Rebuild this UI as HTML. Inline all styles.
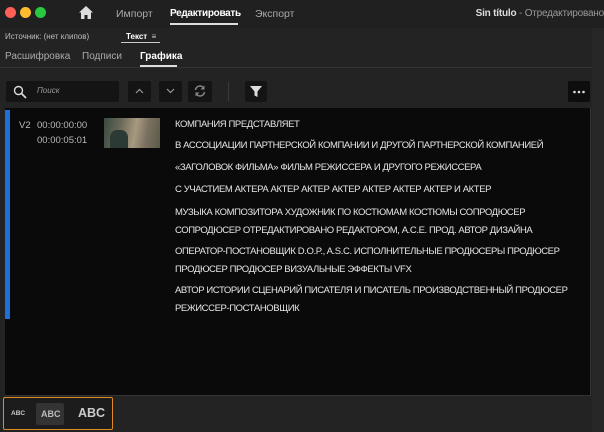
<!DOCTYPE html>
<html><head><meta charset="utf-8"><style>
*{margin:0;padding:0;box-sizing:border-box}
body{width:604px;height:432px;background:#232323;font-family:"Liberation Sans",sans-serif;color:#ccc;position:relative;overflow:hidden}
.a{position:absolute}
.dot{position:absolute;top:7px;width:11px;height:11px;border-radius:50%}
.t{position:absolute;font-size:9.5px;color:#e6e6e6;letter-spacing:-0.4px;white-space:nowrap}
.btn{position:absolute;top:81px;height:21px;background:#141414;border-radius:2px}
</style></head><body>
<div class="a" style="left:0;top:0;width:604px;height:28px;background:#202020"></div>
<div class="dot" style="left:5px;background:#fe5f57"></div>
<div class="dot" style="left:20px;background:#febc2e"></div>
<div class="dot" style="left:35px;background:#28c840"></div>
<svg class="a" style="left:79px;top:6px" width="14" height="13" viewBox="0 0 14 13"><path d="M7 0L0 6.5h2V13h3.5V9h3v4H12V6.5h2z" fill="#ddd"/></svg>
<div class="a" style="left:116px;top:8px;font-size:10.5px;color:#aaa">Импорт</div>
<div class="a" style="left:170px;top:8px;font-size:10px;color:#fff;font-weight:bold;letter-spacing:-0.3px">Редактировать</div>
<div class="a" style="left:170px;top:23px;width:68px;height:2px;background:#ddd"></div>
<div class="a" style="left:255px;top:8px;font-size:10.5px;color:#aaa">Экспорт</div>
<div class="a" style="right:0;top:8px;font-size:10px;color:#ddd;white-space:nowrap;letter-spacing:-0.2px"><b>Sin título</b> <span style="color:#999">- Отредактировано</span></div>
<div class="a" style="left:5px;top:32px;font-size:8px;color:#bbb">Источник: (нет клипов)</div>
<div class="a" style="left:126px;top:32px;font-size:8px;color:#fff;font-weight:bold">Текст <span style="font-weight:normal;color:#ccc">&nbsp;≡</span></div>
<div class="a" style="left:121px;top:42px;width:39px;height:1px;background:#ccc"></div>
<div class="a" style="left:5px;top:51px;font-size:10px;color:#aaa">Расшифровка</div>
<div class="a" style="left:82px;top:51px;font-size:10px;color:#aaa">Подписи</div>
<div class="a" style="left:140px;top:51px;font-size:10px;color:#fff;font-weight:bold">Графика</div>
<div class="a" style="left:140px;top:65px;width:37px;height:2px;background:#ddd"></div>
<div class="a" style="left:0;top:67px;width:592px;height:1px;background:#333"></div>
<div class="btn" style="left:6px;width:113px"></div>
<svg class="a" style="left:13px;top:85px" width="14" height="14" viewBox="0 0 14 14"><circle cx="5.5" cy="5.5" r="4" stroke="#ddd" stroke-width="1.4" fill="none"/><path d="M8.5 8.5L13 13" stroke="#ddd" stroke-width="1.6"/></svg>
<div class="a" style="left:37px;top:86px;font-size:8px;color:#999;font-style:italic">Поиск</div>
<div class="btn" style="left:128px;width:23px"></div>
<svg class="a" style="left:135px;top:88px" width="9" height="6"><path d="M1 5L4.5 1.5 8 5" stroke="#999" fill="none" stroke-width="1.2"/></svg>
<div class="btn" style="left:159px;width:23px"></div>
<svg class="a" style="left:166px;top:88px" width="9" height="6"><path d="M1 1L4.5 4.5 8 1" stroke="#999" fill="none" stroke-width="1.2"/></svg>
<div class="btn" style="left:188px;width:24px"></div>
<svg class="a" style="left:193px;top:84px" width="14" height="14" viewBox="0 0 14 14"><path d="M2.5 6A4.5 4.5 0 0 1 11 4.5M11.5 8A4.5 4.5 0 0 1 3 9.5" stroke="#888" fill="none" stroke-width="1.5"/><path d="M11.5 1.5v4h-4zM2.5 12.5v-4h4z" fill="#888"/></svg>
<div class="a" style="left:228px;top:82px;width:1px;height:19px;background:#3a3a3a"></div>
<div class="btn" style="left:245px;width:22px"></div>
<svg class="a" style="left:250px;top:86px" width="12" height="12"><path d="M0 0h12L7.5 5.5V11l-3-1.5V5.5z" fill="#ddd"/></svg>
<div class="btn" style="left:568px;width:22px;top:81px;background:#0d0d0d"></div>
<svg class="a" style="left:572px;top:90px" width="14" height="4"><circle cx="2.5" cy="2" r="1.3" fill="#ddd"/><circle cx="7" cy="2" r="1.3" fill="#ddd"/><circle cx="11.5" cy="2" r="1.3" fill="#ddd"/></svg>
<div class="a" style="left:5px;top:108px;width:586px;height:288px;background:#0a0a0a;border-right:1px solid #333;border-bottom:1px solid #333"></div>
<div class="a" style="left:5px;top:110px;width:5px;height:209px;background:#1f6fd8"></div>
<div class="a" style="left:19px;top:120px;font-size:9.5px;color:#bbb">V2</div>
<div class="a" style="left:37px;top:120px;font-size:9.5px;color:#bbb">00:00:00:00</div>
<div class="a" style="left:37px;top:135px;font-size:9.5px;color:#bbb">00:00:05:01</div>
<div class="a" style="left:104px;top:118px;width:56px;height:30px;background:linear-gradient(100deg,#3a4a40 0%,#6d6a5a 30%,#a89a80 55%,#7a7060 75%,#5a5a48 100%)"></div>
<div class="a" style="left:110px;top:130px;width:18px;height:18px;background:#2c3a35;border-radius:40% 40% 0 0"></div>
<div class="t" style="left:175px;top:119px">КОМПАНИЯ ПРЕДСТАВЛЯЕТ</div>
<div class="t" style="left:175px;top:140px">В АССОЦИАЦИИ ПАРТНЕРСКОЙ КОМПАНИИ И ДРУГОЙ ПАРТНЕРСКОЙ КОМПАНИЕЙ</div>
<div class="t" style="left:175px;top:162px">«ЗАГОЛОВОК ФИЛЬМА» ФИЛЬМ РЕЖИССЕРА И ДРУГОГО РЕЖИССЕРА</div>
<div class="t" style="left:175px;top:184px">С УЧАСТИЕМ АКТЕРА АКТЕР АКТЕР АКТЕР АКТЕР АКТЕР АКТЕР И АКТЕР</div>
<div class="t" style="left:175px;top:207px">МУЗЫКА КОМПОЗИТОРА ХУДОЖНИК ПО КОСТЮМАМ КОСТЮМЫ СОПРОДЮСЕР</div>
<div class="t" style="left:175px;top:225px">СОПРОДЮСЕР ОТРЕДАКТИРОВАНО РЕДАКТОРОМ, A.C.E. ПРОД. АВТОР ДИЗАЙНА</div>
<div class="t" style="left:175px;top:246px">ОПЕРАТОР-ПОСТАНОВЩИК D.O.P., A.S.C. ИСПОЛНИТЕЛЬНЫЕ ПРОДЮСЕРЫ ПРОДЮСЕР</div>
<div class="t" style="left:175px;top:264px">ПРОДЮСЕР ПРОДЮСЕР ВИЗУАЛЬНЫЕ ЭФФЕКТЫ VFX</div>
<div class="t" style="left:175px;top:285px">АВТОР ИСТОРИИ СЦЕНАРИЙ ПИСАТЕЛЯ И ПИСАТЕЛЬ ПРОИЗВОДСТВЕННЫЙ ПРОДЮСЕР</div>
<div class="t" style="left:175px;top:303px">РЕЖИССЕР-ПОСТАНОВЩИК</div>
<div class="a" style="left:592px;top:28px;width:12px;height:404px;background:#272727"></div>
<div class="a" style="left:3px;top:397px;width:110px;height:33px;border:1.5px solid #e08a22;border-radius:2px;background:#1c1c1c"></div>
<div class="a" style="left:11px;top:410px;font-size:6.5px;font-weight:bold;color:#ccc">ABC</div>
<div class="a" style="left:36px;top:403px;width:28px;height:22px;background:#333;border-radius:2px"></div>
<div class="a" style="left:41px;top:409px;font-size:9px;font-weight:bold;color:#bbb">ABC</div>
<div class="a" style="left:78px;top:406px;font-size:12.5px;font-weight:bold;color:#ccc">ABC</div>
</body></html>
